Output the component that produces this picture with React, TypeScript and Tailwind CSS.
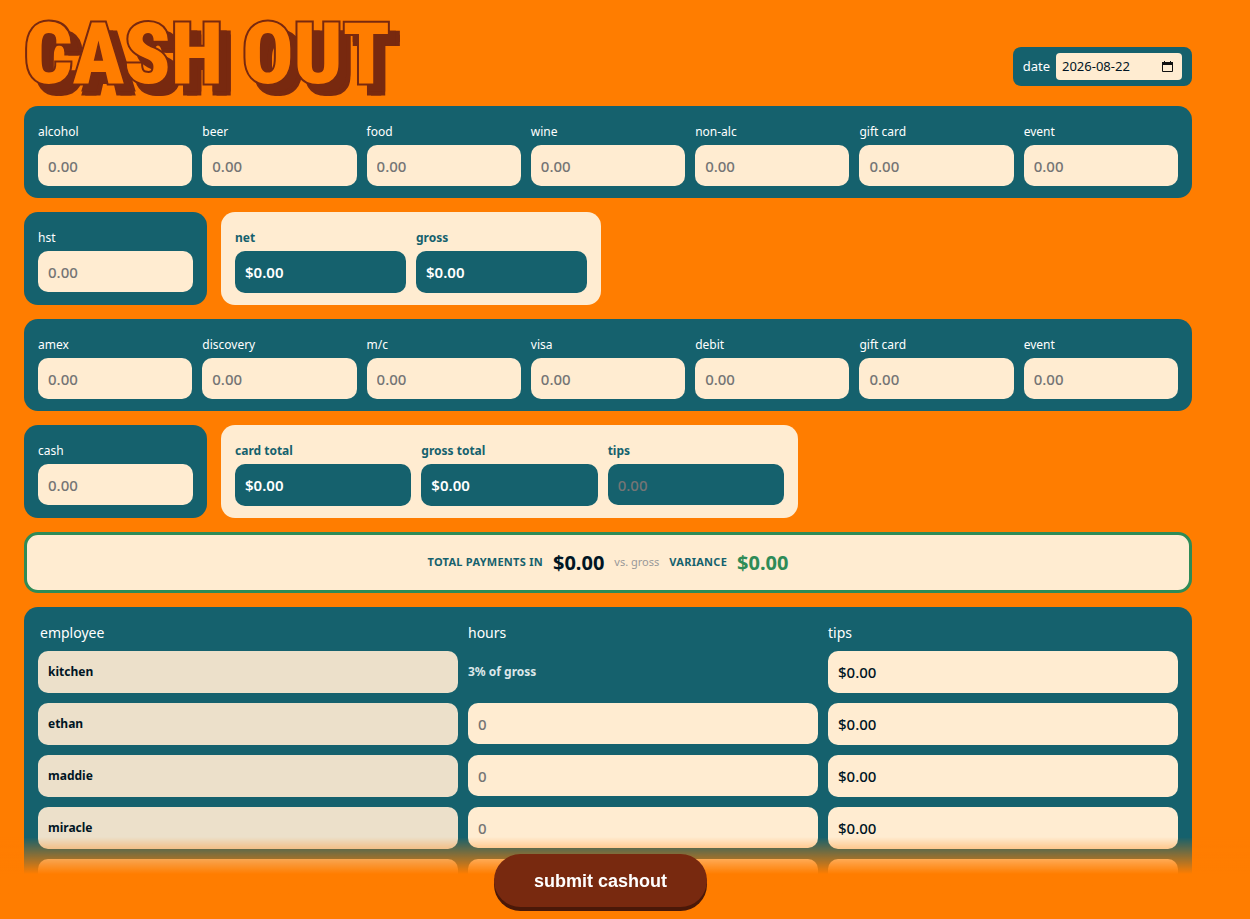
import { useState } from "react";

const SALES = ["alcohol", "beer", "food", "wine", "non-alc", "gift card", "event"];
const CARDS = ["amex", "discovery", "m/c", "visa", "debit", "gift card", "event"];
const STAFF = ["ethan", "maddie", "miracle", "employee 4"];

const FIELD =
  "block w-full h-[41px] rounded-[10px] px-[10px] text-[15px] font-medium outline-none placeholder:text-[#757575]";

function MoneyField({ id, label, dark }: { id: string; label: string; dark?: boolean }) {
  let [value, setValue] = useState("");
  return (
    <div className="min-w-0 flex-1">
      <label
        htmlFor={id}
        className={
          dark
            ? "block py-1 text-xs leading-[19px] font-bold text-[#15616d]"
            : "block py-1 text-xs leading-[19px] text-white"
        }
      >
        {label}
      </label>
      <input
        id={id}
        value={value}
        onChange={(e) => setValue(e.target.value)}
        inputMode="decimal"
        placeholder="0.00"
        className={dark ? `${FIELD} bg-[#15616d] text-white` : `${FIELD} bg-[#ffecd1] text-[#001524]`}
      />
    </div>
  );
}

function Total({ label, value }: { label: string; value: string }) {
  return (
    <div className="min-w-0 flex-1">
      <div className="py-1 text-xs leading-[19px] font-bold text-[#15616d]">{label}</div>
      <div className="flex h-[42px] items-center rounded-[10px] bg-[#15616d] px-[10px] text-[15px] font-semibold text-white">
        {value}
      </div>
    </div>
  );
}

function FieldRow({ prefix, names }: { prefix: string; names: string[] }) {
  return (
    <section className="flex gap-[10px] rounded-[14px] bg-[#15616d] px-[14px] py-3">
      {names.map((name) => (
        <MoneyField key={name} id={`${prefix}-${name}`} label={name} />
      ))}
    </section>
  );
}

function Header() {
  let [date, setDate] = useState("2026-08-22");
  return (
    <header className="flex items-end justify-between pt-[22px] pb-5">
      <h1 className="font-['Roboto_Condensed','Liberation_Sans_Narrow','Liberation_Sans',sans-serif] text-[85px] leading-[64px] font-black whitespace-nowrap text-[#ff7d00] uppercase [paint-order:stroke_fill] [-webkit-text-stroke:4px_#78290f] [text-shadow:8px_8px_0_#78290f,12px_8px_0_#78290f,8px_12px_0_#78290f,12px_12px_0_#78290f]">
        Cash Out
      </h1>
      <div className="flex h-[39px] items-center gap-[6px] rounded-lg bg-[#15616d] px-[10px]">
        <label htmlFor="date" className="text-[13px] text-white">
          date
        </label>
        <div className="flex h-[27px] w-[126px] items-center rounded bg-[#ffecd1] px-[6px]">
          <input
            id="date"
            value={date}
            onChange={(e) => setDate(e.target.value)}
            className="min-w-0 flex-1 text-[13px] text-[#001524] outline-none"
          />
          <button type="button" aria-label="pick a date" className="px-[3px]">
            <svg width="11" height="12" viewBox="0 0 11 12" fill="none">
              <path d="M0.5 2.5h10v8h-10z" stroke="#111" />
              <path d="M0 1h11v3H0zM2 0h1v1H2zM8 0h1v1H8z" fill="#111" />
            </svg>
          </button>
        </div>
      </div>
    </header>
  );
}

function EmployeeTable() {
  return (
    <section className="rounded-[14px] bg-[#15616d] px-1 pt-2">
      <table className="w-full table-fixed border-separate border-spacing-[10px]">
        <thead>
          <tr className="text-left text-sm leading-4 text-white">
            <th className="w-[37.5%] p-0 pl-[2px] font-normal">employee</th>
            <th className="p-0 font-normal">hours</th>
            <th className="p-0 font-normal">tips</th>
          </tr>
        </thead>
        <tbody>
          {["kitchen", ...STAFF].map((name, index) => (
            <tr key={name} className="h-[42px] align-top">
              <td className="p-0">
                <div className="flex h-[42px] items-center rounded-[10px] bg-[#ece0ca] px-[10px] text-xs font-bold text-[#001524]">
                  {name}
                </div>
              </td>
              <td className="p-0">
                {index === 0 ? (
                  <div className="flex h-[42px] items-center text-xs font-bold text-[#dce7e9]">
                    3% of gross
                  </div>
                ) : (
                  <input
                    aria-label={`${name} hours`}
                    placeholder="0"
                    inputMode="decimal"
                    className={`${FIELD} bg-[#ffecd1] text-[#001524]`}
                  />
                )}
              </td>
              <td className="p-0">
                <div className="flex h-[42px] items-center rounded-[10px] bg-[#ffecd1] px-[10px] text-[15px] font-medium text-[#001524]">
                  $0.00
                </div>
              </td>
            </tr>
          ))}
        </tbody>
      </table>
    </section>
  );
}

function App() {
  return (
    <div className="h-screen overflow-hidden bg-[#ff7d00] font-['Noto_Sans',sans-serif]">
      <main className="pr-[58px] pl-6">
        <Header />
        <div className="flex flex-col gap-[14px]">
          <FieldRow prefix="sales" names={SALES} />

          <div className="flex gap-[14px]">
            <section className="flex w-[183px] rounded-[14px] bg-[#15616d] px-[14px] py-3">
              <MoneyField id="hst" label="hst" />
            </section>
            <section className="flex w-[380px] gap-[10px] rounded-[14px] bg-[#ffecd1] px-[14px] py-3">
              <Total label="net" value="$0.00" />
              <Total label="gross" value="$0.00" />
            </section>
          </div>

          <FieldRow prefix="cards" names={CARDS} />

          <div className="flex gap-[14px]">
            <section className="flex w-[183px] rounded-[14px] bg-[#15616d] px-[14px] py-3">
              <MoneyField id="cash" label="cash" />
            </section>
            <section className="flex w-[577px] gap-[10px] rounded-[14px] bg-[#ffecd1] px-[14px] py-3">
              <Total label="card total" value="$0.00" />
              <Total label="gross total" value="$0.00" />
              <MoneyField id="tips" label="tips" dark />
            </section>
          </div>

          <section className="flex h-[61px] items-center justify-center gap-[10px] rounded-[14px] border-3 border-[#2e8b57] bg-[#ffecd1]">
            <span className="text-[11px] font-bold tracking-wide text-[#15616d]">TOTAL PAYMENTS IN</span>
            <span className="text-xl font-bold text-[#001524]">$0.00</span>
            <span className="text-[11px] text-[#999]">vs. gross</span>
            <span className="text-[11px] font-bold tracking-wide text-[#15616d]">VARIANCE</span>
            <span className="text-xl font-bold text-[#2e8b57]">$0.00</span>
          </section>

          <EmployeeTable />
        </div>
      </main>

      {/* sticky submit bar, fades out the list behind it */}
      <div className="fixed inset-x-0 bottom-0 flex justify-center bg-linear-to-t from-[#ff7d00] from-55% to-[#ff7d00]/0 pt-[17px] pr-[49px] pb-3">
        <button
          type="submit"
          className="h-[53px] rounded-full bg-[#78290f] px-10 font-['Liberation_Sans',sans-serif] text-lg font-bold text-white shadow-[0_4px_0_#4a1808]"
        >
          submit cashout
        </button>
      </div>
    </div>
  );
}

export default App;
